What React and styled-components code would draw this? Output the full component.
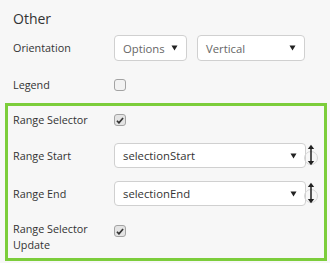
import React from "react";
import styled, { createGlobalStyle } from "styled-components";

const GlobalStyle = createGlobalStyle`
  body {
    margin: 0;
    background: #f7f7f7;
    font-family: "Open Sans", "Noto Sans", sans-serif;
    color: #333;
  }
`;

const Page = styled.div`
  width: 330px;
  height: 263px;
  box-sizing: border-box;
  padding: 0 3px 0 5px;
  overflow: hidden;
`;

const Title = styled.div`
  margin: 10px 0 0 8px;
  font-size: 14px;
  line-height: 18px;
`;

const Row = styled.div`
  display: grid;
  grid-template-columns: 101px 1fr;
  align-items: center;
  min-height: ${(p) => p.$h || 26}px;
  margin-top: ${(p) => p.$mt || 0}px;
  padding-left: 8px;
`;

const Label = styled.div`
  font-size: 10.8px;
  line-height: 16px;
  color: #333;
`;

const Controls = styled.div`
  display: flex;
  align-items: center;
  gap: 10px;
`;

const Cell = styled.div`
  display: flex;
  align-self: ${(p) => (p.$top ? "start" : "center")};
  margin-top: ${(p) => (p.$top ? 4 : 0)}px;
`;

const Highlight = styled.div`
  margin-top: 5px;
  border: 3px solid #7ccd3b;
  padding: 1px 0 5px;
  ${Row} {
    padding-left: 5px;
  }
`;

const Select = styled.div`
  box-sizing: border-box;
  width: ${(p) => p.$w}px;
  height: ${(p) => p.$h || 26}px;
  display: flex;
  align-items: center;
  justify-content: space-between;
  padding: 0 8px 0 8px;
  background: #fff;
  border: 1px solid #d0d0d0;
  border-radius: 4px;
  font-size: 11.3px;
  color: ${(p) => (p.$dark ? "#333" : "#666")};
`;

const Caret = () => (
  <svg width="7" height="6" viewBox="0 0 7 6">
    <path d="M0.5 0.5h6L3.5 5.5z" fill="#222" />
  </svg>
);

const Box = styled.span`
  box-sizing: border-box;
  width: 12px;
  height: 12px;
  display: inline-flex;
  align-items: center;
  justify-content: center;
  border: 1px solid #a3a3a3;
  border-radius: 3px;
  background: ${(p) => (p.$on ? "#e4e4e4" : "#f2f2f2")};
`;

const Check = ({ on }) => (
  <Box $on={on}>
    {on && (
      <svg width="8" height="7" viewBox="0 0 9 8">
        <path d="M1 4.3l2.3 2.4L8 1.2" stroke="#333" strokeWidth="1.9" fill="none" />
      </svg>
    )}
  </Box>
);

const SwapIcon = () => (
  <svg width="14" height="25" viewBox="0 0 14 25" style={{ marginLeft: -6 }}>
    <circle cx="7" cy="15" r="6.5" fill="none" stroke="#d6d6d6" strokeWidth="1" />
    <path d="M7 4v16" stroke="#222" strokeWidth="1.5" />
    <path d="M3.8 6L7 1.8 10.2 6z" fill="#222" />
    <path d="M3.8 18L7 22.2 10.2 18z" fill="#222" />
  </svg>
);

const SelectRow = styled.div`
  display: flex;
  align-items: center;
  gap: 4px;
`;

export default function App() {
  return (
    <Page>
      <GlobalStyle />
      <Title>Other</Title>
      <Row $mt={7}>
        <Label>Orientation</Label>
        <Controls>
          <Select $w={73}>
            Options
            <Caret />
          </Select>
          <Select $w={108}>
            Vertical
            <Caret />
          </Select>
        </Controls>
      </Row>
      <Row $mt={11}>
        <Label>Legend</Label>
        <Cell>
          <Check />
        </Cell>
      </Row>
      <Highlight>
        <Row>
          <Label>Range Selector</Label>
          <Cell>
            <Check on />
          </Cell>
        </Row>
        <Row $mt={10} $h={25}>
          <Label>Range Start</Label>
          <SelectRow>
            <Select $w={192} $h={25} $dark>
              selectionStart
              <Caret />
            </Select>
            <SwapIcon />
          </SelectRow>
        </Row>
        <Row $mt={13} $h={25}>
          <Label>Range End</Label>
          <SelectRow>
            <Select $w={192} $h={25} $dark>
              selectionEnd
              <Caret />
            </Select>
            <SwapIcon />
          </SelectRow>
        </Row>
        <Row $mt={15} $h={32}>
          <Label>
            Range Selector
            <br />
            Update
          </Label>
          <Cell $top>
            <Check on />
          </Cell>
        </Row>
      </Highlight>
    </Page>
  );
}
